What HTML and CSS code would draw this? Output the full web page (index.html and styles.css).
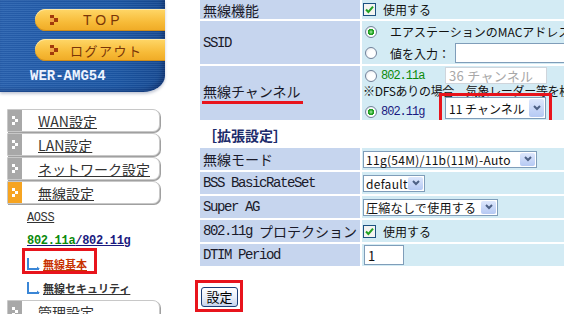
FILE: index.html
```html
<!DOCTYPE html>
<html lang="ja">
<head>
  <meta charset="UTF-8">
  <title>無線基本設定</title>
  <link rel="stylesheet" href="styles.css">
</head>
<body>
<div class="page">
  <!-- left menu -->
  <aside class="side">
    <div class="logo">
      <a href="#" class="pill">
        <svg class="pill-mark" width="8" height="10" viewBox="0 0 8 10"><rect x="0" y="0" width="4" height="3" fill="#a33a0c"/><rect x="4" y="3" width="4" height="4" fill="#a33a0c"/><rect x="0" y="7" width="4" height="3" fill="#a33a0c"/><rect x="0" y="3" width="4" height="4" fill="#f0a640"/></svg>
        <span class="pill-text pill-top">TOP</span>
      </a>
      <a href="#" class="pill">
        <svg class="pill-mark" width="8" height="10" viewBox="0 0 8 10"><rect x="0" y="0" width="4" height="3" fill="#a33a0c"/><rect x="4" y="3" width="4" height="4" fill="#a33a0c"/><rect x="0" y="7" width="4" height="3" fill="#a33a0c"/><rect x="0" y="3" width="4" height="4" fill="#f0a640"/></svg>
        <span class="pill-text pill-logout">ログアウト</span>
      </a>
      <div class="model">WER-AMG54</div>
    </div>

    <ul class="menu">
      <li class="menu-item"><span class="menu-icon"><svg width="7" height="9" viewBox="0 0 7 9"><rect x="0" y="0" width="3" height="3" fill="#fff"/><rect x="3" y="3" width="3" height="3" fill="#fff"/><rect x="0" y="6" width="3" height="3" fill="#fff"/></svg></span><a href="#">WAN設定</a></li>
      <li class="menu-item"><span class="menu-icon"><svg width="7" height="9" viewBox="0 0 7 9"><rect x="0" y="0" width="3" height="3" fill="#fff"/><rect x="3" y="3" width="3" height="3" fill="#fff"/><rect x="0" y="6" width="3" height="3" fill="#fff"/></svg></span><a href="#">LAN設定</a></li>
      <li class="menu-item"><span class="menu-icon"><svg width="7" height="9" viewBox="0 0 7 9"><rect x="0" y="0" width="3" height="3" fill="#fff"/><rect x="3" y="3" width="3" height="3" fill="#fff"/><rect x="0" y="6" width="3" height="3" fill="#fff"/></svg></span><a href="#">ネットワーク設定</a></li>
      <li class="menu-item"><span class="menu-icon active"><svg width="7" height="9" viewBox="0 0 7 9"><rect x="0" y="0" width="3" height="3" fill="#fff"/><rect x="3" y="3" width="3" height="3" fill="#fff"/><rect x="0" y="6" width="3" height="3" fill="#fff"/></svg></span><a href="#">無線設定</a></li>
    </ul>

    <ul class="sub">
      <li class="sub-aoss"><a href="#" class="mono">AOSS</a></li>
      <li class="sub-band"><a href="#" class="mono band"><span class="band-a">802.11a</span>/802.11g</a></li>
      <li class="sub-link current">
        <svg width="15" height="14" viewBox="0 0 15 14"><path d="M2 1 V12 H13" fill="none" stroke="#3a86d6" stroke-width="2"/><path d="M11 9.5 L14 12 L11 12 Z" fill="#3a86d6"/></svg>
        <a href="#">無線基本</a>
      </li>
      <li class="sub-link">
        <svg width="15" height="14" viewBox="0 0 15 14"><path d="M2 1 V12 H13" fill="none" stroke="#3a86d6" stroke-width="2"/><path d="M11 9.5 L14 12 L11 12 Z" fill="#3a86d6"/></svg>
        <a href="#">無線セキュリティ</a>
      </li>
    </ul>

    <div class="menu-item"><span class="menu-icon"><svg width="7" height="9" viewBox="0 0 7 9"><rect x="0" y="0" width="3" height="3" fill="#fff"/><rect x="3" y="3" width="3" height="3" fill="#fff"/><rect x="0" y="6" width="3" height="3" fill="#fff"/></svg></span><a href="#">管理設定</a></div>
  </aside>

  <!-- settings -->
  <main class="main">
    <div class="form form-basic">
      <div class="label">無線機能</div>
      <div class="value">
        <div class="line"><span class="check"><svg width="13" height="13" viewBox="0 0 13 13"><rect x="0.5" y="0.5" width="12" height="12" fill="#f4f4f0" stroke="#1c5180"/><path d="M3 6.5 L5.4 9 L10 3.6" fill="none" stroke="#21a121" stroke-width="2"/></svg></span>使用する</div>
      </div>

      <div class="label"><span class="mono">SSID</span></div>
      <div class="value">
        <div class="line ssid-line"><span class="radio on"></span>エアステーションのMACアドレス</div>
        <div class="line ssid-line"><span class="radio"></span>値を入力：<span class="textbox"></span></div>
      </div>

      <div class="label"><span class="marked">無線チャンネル</span></div>
      <div class="value channel">
        <div class="line band-line-a">
          <span class="band-pick"><span class="radio"></span><span class="mono band-a">802.11a</span></span>
          <span class="select disabled">36 チャンネル</span>
        </div>
        <div class="note">※DFSありの場合、気象レーダー等を検出した場合、チャンネルを変更します</div>
        <div class="line band-line-g">
          <span class="band-pick"><span class="radio on"></span><span class="mono band-g">802.11g</span></span>
          <span class="boxed boxed-select"><span class="select big">11 チャンネル<span class="select-btn"><svg width="8" height="6" viewBox="0 0 8 6"><path d="M1 1 L4 4 L7 1" fill="none" stroke="#4d6185" stroke-width="2"/></svg></span></span></span>
        </div>
      </div>
    </div>

    <h2 class="section">［拡張設定］</h2>

    <div class="form form-ext">
      <div class="label">無線モード</div>
      <div class="value">
        <div class="line"><span class="select w-mode">11g(54M)/11b(11M)-Auto<span class="select-btn"><svg width="8" height="6" viewBox="0 0 8 6"><path d="M1 1 L4 4 L7 1" fill="none" stroke="#4d6185" stroke-width="2"/></svg></span></span></div>
      </div>

      <div class="label"><span class="mono">BSS BasicRateSet</span></div>
      <div class="value">
        <div class="line"><span class="select w-rate">default<span class="select-btn"><svg width="8" height="6" viewBox="0 0 8 6"><path d="M1 1 L4 4 L7 1" fill="none" stroke="#4d6185" stroke-width="2"/></svg></span></span></div>
      </div>

      <div class="label"><span class="mono">Super AG</span></div>
      <div class="value">
        <div class="line"><span class="select w-ag">圧縮なしで使用する<span class="select-btn"><svg width="8" height="6" viewBox="0 0 8 6"><path d="M1 1 L4 4 L7 1" fill="none" stroke="#4d6185" stroke-width="2"/></svg></span></span></div>
      </div>

      <div class="label"><span class="mono">802.11g </span>プロテクション</div>
      <div class="value">
        <div class="line"><span class="check"><svg width="13" height="13" viewBox="0 0 13 13"><rect x="0.5" y="0.5" width="12" height="12" fill="#f4f4f0" stroke="#1c5180"/><path d="M3 6.5 L5.4 9 L10 3.6" fill="none" stroke="#21a121" stroke-width="2"/></svg></span>使用する</div>
      </div>

      <div class="label"><span class="mono">DTIM Period</span></div>
      <div class="value">
        <div class="line"><span class="textbox small">1</span></div>
      </div>
    </div>

    <div class="actions">
      <span class="boxed boxed-button"><button class="submit">設定</button></span>
    </div>
  </main>
</div>
</body>
</html>
```

FILE: styles.css
```css
html, body {
  margin: 0;
  overflow: hidden;
}

body {
  width: 564px;
  height: 314px;
  font-family: "Noto Sans CJK JP", sans-serif;
  font-size: 12px;
  color: #111;
  background: #fff;
}

.page {
  display: flex;
  gap: 35px;
}

.mono {
  font-family: "Liberation Mono", monospace;
}

/* ---- left side ---- */

.side {
  width: 165px;
  flex: none;
}

.logo {
  height: 92px;
  padding-top: 9px;
  box-sizing: border-box;
  background:
    repeating-linear-gradient(180deg, rgba(255,255,255,0.07) 0 1px, rgba(0,0,40,0.06) 1px 2px),
    linear-gradient(90deg, #2862b0 0%, #1c58a6 70%, #174b93 100%);
  border-bottom-right-radius: 22px 16px;
  box-shadow: inset -3px -2px 4px rgba(0,0,40,0.25), 0 2px 3px rgba(20,40,90,0.25);
}

.pill {
  display: flex;
  align-items: center;
  height: 22px;
  margin: 0 0 8px 35px;
  padding-left: 15px;
  border-radius: 11px 0 0 11px;
  background: linear-gradient(#ffd768, #f7bb38 60%, #efaa25);
  box-shadow: inset 0 1px 0 #ffe9a8, inset 0 -1px 0 #cf8d1a;
  color: #7a3608;
  text-decoration: none;
}

.pill-text {
  font-size: 14px;
}

.pill-top {
  margin-left: 25px;
  letter-spacing: 4px;
  font-family: "Liberation Sans", sans-serif;
}

.pill-logout {
  margin-left: 12px;
  font-size: 13px;
  letter-spacing: 1.5px;
}

.model {
  margin: 7px 0 0 30px;
  font-family: "Liberation Mono", monospace;
  font-size: 14px;
  font-weight: bold;
  line-height: 14px;
  color: #eef4ff;
}

.menu {
  list-style: none;
  margin: 17px 0 0;
  padding: 0;
}

.menu-item {
  display: flex;
  align-items: center;
  height: 21px;
  margin: 0 5px 1px 7px;
  border: 1px solid #c8c8c8;
  border-radius: 0 7px 7px 0;
  box-shadow: 1px 1px 0 #a0a0a0;
  background: #fff;
}

.menu-icon {
  width: 14px;
  height: 100%;
  display: flex;
  align-items: center;
  justify-content: center;
  background: #a8a8a8;
}

.menu-icon.active {
  background: #f6a421;
}

.menu-item a {
  margin-left: 16px;
  font-size: 14px;
  color: #333;
}

.sub {
  list-style: none;
  margin: 0;
  padding: 0 0 0 27px;
}

.sub li {
  display: flex;
  align-items: center;
}

.sub-aoss {
  height: 25px;
}

.sub-aoss a {
  font-size: 12px;
  letter-spacing: -0.4px;
  color: #333;
}

.sub-band {
  height: 22px;
}

.band {
  font-size: 12px;
  font-weight: bold;
  letter-spacing: -0.3px;
  color: #1a1a80;
}

.band-a {
  color: #0b8a0b;
}

.sub-link {
  height: 24px;
  gap: 2px;
  margin-left: -1px;
  position: relative;
}

.sub-link a {
  font-size: 11px;
  font-weight: bold;
  color: #333;
}

.sub-link.current a {
  color: #c83200;
}

/* red annotation boxes */
.sub-link.current::after,
.boxed::after {
  content: "";
  position: absolute;
  border: 3px solid #e8141c;
  box-sizing: border-box;
}

.sub-link.current::after {
  left: -4px;
  top: -4px;
  width: 75px;
  height: 26px;
}

/* ---- main ---- */

.main {
  flex: none;
  width: 420px;
}

.form {
  display: grid;
  grid-template-columns: 160px 240px;
  gap: 2px;
}

.form-basic {
  grid-template-rows: 19px 43px 54px;
}

.form-ext {
  grid-template-rows: repeat(5, 22px);
}

.label {
  display: flex;
  align-items: center;
  padding-left: 3px;
  background: #c6d5ee;
  font-size: 14px;
  color: #1a1a2a;
  white-space: nowrap;
}

.label .mono {
  font-size: 14px;
  letter-spacing: -1.4px;
  white-space: pre;
}

.marked {
  display: inline-block;
  padding: 0 2px 1px 1px;
  margin-left: -1px;
  border-bottom: 3px solid #e8141c;
  line-height: 17px;
}

.value {
  display: flex;
  flex-direction: column;
  justify-content: center;
  padding-left: 1px;
  background: #d3ebf4;
  white-space: nowrap;
  overflow: hidden;
}

.line {
  display: flex;
  align-items: center;
}

.check {
  display: flex;
  margin-right: 7px;
}

.radio {
  width: 12px;
  height: 12px;
  margin: 0 13px 0 2px;
  box-sizing: border-box;
  border: 1px solid #72829a;
  border-radius: 50%;
  background: radial-gradient(circle at 60% 60%, #fff 40%, #dfe3e8);
  flex: none;
}

.radio.on {
  background: radial-gradient(circle, #7ed67e 0 1px, #21a121 2px 3px, transparent 3.5px), radial-gradient(circle at 60% 60%, #fff 40%, #dfe3e8);
}

.ssid-line {
  height: 21px;
}

.ssid-line + .ssid-line {
  height: 22px;
}

.textbox {
  display: inline-flex;
  align-items: center;
  width: 150px;
  height: 20px;
  margin-left: 5px;
  box-sizing: border-box;
  border: 1px solid #7f9db9;
  background: #fff;
  font-size: 13px;
  padding-left: 3px;
}

.textbox.small {
  width: 40px;
  margin-left: 1px;
}

.channel {
  justify-content: flex-start;
}

.band-pick {
  display: flex;
  align-items: center;
  width: 82px;
  flex: none;
}

.band-pick .radio {
  margin-right: 4px;
}

.band-pick .mono {
  font-size: 12px;
  letter-spacing: -1px;
}

.band-g {
  color: #1a1a80;
}

.band-line-a {
  height: 19px;
}

.note {
  height: 12px;
  line-height: 12px;
  font-size: 12px;
  letter-spacing: -0.3px;
}

.band-line-g {
  height: 23px;
  align-items: flex-start;
}

.band-line-g .band-pick {
  margin-top: 8px;
}

.select {
  display: inline-flex;
  align-items: center;
  height: 17px;
  padding-left: 2px;
  box-sizing: border-box;
  border: 1px solid #7f9db9;
  background: #fff;
  font-size: 12px;
  letter-spacing: 0.3px;
  color: #111;
}

.select.disabled {
  width: 102px;
  border-color: #cfd5dc;
  color: #a8a8a8;
  font-size: 13px;
  padding-left: 3px;
}

.select.big {
  width: 101px;
  height: 22px;
  font-size: 12px;
  letter-spacing: 0;
  padding-left: 3px;
}

.select-btn {
  display: flex;
  align-items: center;
  justify-content: center;
  width: 15px;
  height: calc(100% - 2px);
  margin: 0 1px 0 auto;
  border-radius: 2px;
  background: linear-gradient(#dde7fc, #b5c9f3);
  flex: none;
}

.w-mode { width: 174px; }
.w-rate { width: 62px; }
.w-ag { width: 135px; }

.boxed {
  position: relative;
  display: inline-flex;
}

.boxed-select::after {
  left: -6px;
  right: -6px;
  top: -4px;
  bottom: -7px;
}

.section {
  margin: 0;
  height: 28px;
  padding: 2px 0 0 3px;
  box-sizing: border-box;
  font-size: 14px;
  line-height: 26px;
  font-weight: bold;
  color: #1c2b6b;
}

.actions {
  margin-top: 21px;
  padding-left: 1px;
}

.boxed-button::after {
  left: -6px;
  right: -5px;
  top: -7px;
  bottom: -5px;
}

.submit {
  width: 37px;
  height: 20px;
  padding: 0;
  border: 1px solid #1c3f78;
  border-radius: 3px;
  background: linear-gradient(#ffffff, #e8eef8 55%, #c5d3ec);
  font-family: "Noto Sans CJK JP", sans-serif;
  font-size: 13px;
  line-height: 18px;
  color: #000;
}
```
